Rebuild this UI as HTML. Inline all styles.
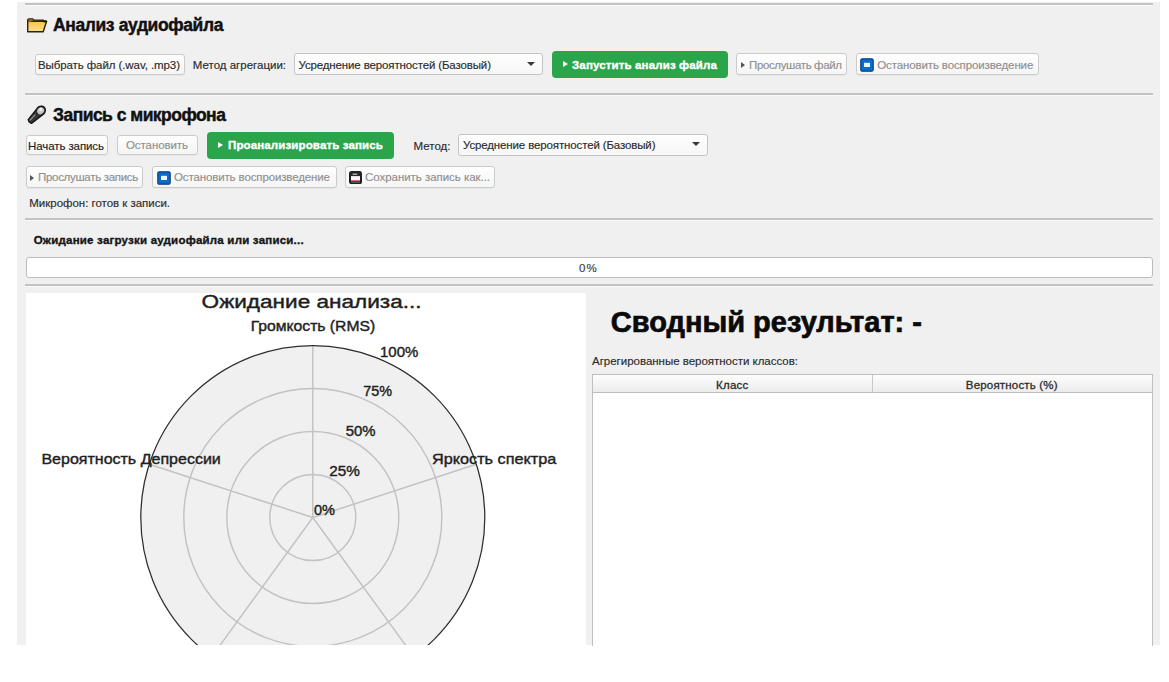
<!DOCTYPE html>
<html><head><meta charset="utf-8"><style>*{margin:0;padding:0;box-sizing:border-box}
html,body{width:1169px;height:682px;overflow:hidden;background:#fff;font-family:"Liberation Sans",sans-serif;color:#000}
.a,.t,.btn,.combo,.green,.prog,.hl{position:absolute}
.t{white-space:nowrap;-webkit-text-stroke:0.15px currentColor}
.tb{-webkit-text-stroke:0.35px currentColor}
.hl{left:25px;width:1128px;height:2px;background:#c3c3c3;box-shadow:0 1px 0 #f9f9f9}
.btn{border:1px solid #cbcbcb;border-radius:3px;background:linear-gradient(#fefefe,#f5f5f5);box-shadow:0 1px 0 rgba(0,0,0,0.04)}
.combo{border:1px solid #c4c4c4;border-radius:3px;background:linear-gradient(#fefefe,#f7f7f7)}
.green{background:#2aa54a;border-radius:4px}
.prog{border:1px solid #bcbcbc;border-radius:3px;background:#fff}
</style></head><body>
<div class="a" style="left:17px;top:2px;width:1143px;height:643px;background:#f0f0f0"></div>
<div class="hl" style="top:3px"></div>
<div class="hl" style="top:93px"></div>
<div class="hl" style="top:217.5px"></div>
<div class="hl" style="top:284px"></div>
<svg class="a" style="left:26px;top:17px" width="22" height="17" viewBox="0 0 22 17">
<defs><linearGradient id="fg" x1="0" y1="0" x2="0" y2="1"><stop offset="0" stop-color="#f6c54a"/><stop offset="1" stop-color="#fbe08a"/></linearGradient></defs>
<path d="M1.7 14.8 L1.7 3.1 Q1.7 1.9 2.9 1.9 L6.8 1.9 L8 3 L17 3 Q17.6 3 17.6 3.6 L17.6 4.3" fill="#e0a040" stroke="#2b2210" stroke-width="1.25" stroke-linejoin="round"/>
<path d="M1.7 14.8 L1.7 4.3 L20.6 4.3 L17.2 14.8 Z" fill="url(#fg)" stroke="#2b2210" stroke-width="1.4" stroke-linejoin="round"/>
<path d="M2.5 4.9 L5.5 4.9" stroke="#f08a30" stroke-width="1.1"/>
<path d="M17.4 4.4 L20.6 4.4" stroke="#111" stroke-width="1.8"/>
</svg>
<div class="t tb" style="left:53.00px;top:16.94px;font-size:17.5px;line-height:17.5px;letter-spacing:-0.391px;color:#111;font-weight:bold;-webkit-text-stroke:0.45px currentColor">Анализ аудиофайла</div>
<div class="btn" style="left:34.5px;top:53.5px;width:150.0px;height:21.0px;"></div>
<div class="t" style="left:37.90px;top:59.92px;font-size:11.5px;line-height:11.5px;letter-spacing:-0.083px;color:#2b2b2b;">Выбрать файл (.wav, .mp3)</div>
<div class="t" style="left:192.80px;top:60.02px;font-size:11.5px;line-height:11.5px;letter-spacing:-0.003px;color:#2b2b2b;">Метод агрегации:</div>
<div class="combo" style="left:293.5px;top:53px;width:249.0px;height:22px;"></div>
<div class="t" style="left:298.50px;top:60.12px;font-size:11.5px;line-height:11.5px;letter-spacing:-0.134px;color:#2b2b2b;">Усреднение вероятностей (Базовый)</div>
<div class="a" style="left:526.8px;top:61.8px;width:0;height:0;border-left:4px solid transparent;border-right:4px solid transparent;border-top:4px solid #3a3a3a"></div>
<div class="green" style="left:551.5px;top:51px;width:176.5px;height:26.700000000000003px;"></div>
<div class="a" style="left:562.5px;top:61.0px;width:0;height:0;border-top:3.5px solid transparent;border-bottom:3.5px solid transparent;border-left:5px solid #fff"></div>
<div class="t tb" style="left:572.00px;top:59.92px;font-size:11.5px;line-height:11.5px;letter-spacing:0.143px;color:#fff;font-weight:bold;">Запустить анализ файла</div>
<div class="btn" style="left:736px;top:53.3px;width:110.5px;height:22.0px;"></div>
<div class="a" style="left:741px;top:62.0px;width:0;height:0;border-top:3.0px solid transparent;border-bottom:3.0px solid transparent;border-left:4px solid #555"></div>
<div class="t" style="left:749.00px;top:60.02px;font-size:11.5px;line-height:11.5px;letter-spacing:-0.364px;color:#8f8f8f;">Прослушать файл</div>
<div class="btn" style="left:855.5px;top:53.3px;width:183.5px;height:22.0px;"></div>
<svg class="a" style="left:859.7px;top:58px" width="14" height="14" viewBox="0 0 14 14"><rect x="0.8" y="0.8" width="12.4" height="12.4" rx="1.5" fill="#0b6cc9" stroke="#0a3f86" stroke-width="1.2"/><rect x="4" y="4.8" width="6" height="4.2" fill="#e8f6ff"/></svg>
<div class="t" style="left:877.30px;top:60.02px;font-size:11.5px;line-height:11.5px;letter-spacing:-0.128px;color:#8f8f8f;">Остановить воспроизведение</div>
<svg class="a" style="left:25px;top:103px" width="24" height="23" viewBox="0 0 24 23">
<g transform="rotate(45 12 11.5)">
<path d="M7.6 6.4 A4.4 5.2 0 0 1 16.4 6.4 L14.6 21.4 Q12 23.2 9.4 21.4 Z" fill="#333" stroke="#121212" stroke-width="1.2" stroke-linejoin="round"/>
<ellipse cx="12" cy="6.3" rx="3.2" ry="3.7" fill="#c4c4c4"/>
<ellipse cx="11.1" cy="5.3" rx="1.5" ry="1.7" fill="#f2f2f2"/>
<path d="M10.9 13.2 L11.1 20.2" stroke="#909090" stroke-width="1.3" stroke-linecap="round"/>
</g></svg>
<div class="t tb" style="left:53.00px;top:106.84px;font-size:17.5px;line-height:17.5px;letter-spacing:-0.529px;color:#111;font-weight:bold;-webkit-text-stroke:0.45px currentColor">Запись с микрофона</div>
<div class="btn" style="left:25.7px;top:134.8px;width:82.7px;height:20.69999999999999px;"></div>
<div class="t" style="left:28.10px;top:140.52px;font-size:11.5px;line-height:11.5px;letter-spacing:-0.100px;color:#1e1e1e;">Начать запись</div>
<div class="btn" style="left:117px;top:134.8px;width:81.4px;height:20.69999999999999px;"></div>
<div class="t" style="left:126.00px;top:140.32px;font-size:11.5px;line-height:11.5px;letter-spacing:-0.083px;color:#8f8f8f;">Остановить</div>
<div class="green" style="left:207.3px;top:131.5px;width:186.39999999999998px;height:27.5px;"></div>
<div class="a" style="left:218.2px;top:142.0px;width:0;height:0;border-top:3.5px solid transparent;border-bottom:3.5px solid transparent;border-left:5px solid #fff"></div>
<div class="t tb" style="left:228.00px;top:140.12px;font-size:11.5px;line-height:11.5px;letter-spacing:0.132px;color:#fff;font-weight:bold;">Проанализировать запись</div>
<div class="t" style="left:413.50px;top:140.72px;font-size:11.5px;line-height:11.5px;letter-spacing:0.020px;color:#2b2b2b;">Метод:</div>
<div class="combo" style="left:458px;top:134px;width:249.60000000000002px;height:22px;"></div>
<div class="t" style="left:463.00px;top:140.12px;font-size:11.5px;line-height:11.5px;letter-spacing:-0.134px;color:#2b2b2b;">Усреднение вероятностей (Базовый)</div>
<div class="a" style="left:691.5px;top:142.3px;width:0;height:0;border-left:4px solid transparent;border-right:4px solid transparent;border-top:4px solid #3a3a3a"></div>
<div class="btn" style="left:26.2px;top:165.6px;width:117.3px;height:22.0px;"></div>
<div class="a" style="left:30.1px;top:174.8px;width:0;height:0;border-top:3.0px solid transparent;border-bottom:3.0px solid transparent;border-left:4px solid #555"></div>
<div class="t" style="left:38.00px;top:172.02px;font-size:11.5px;line-height:11.5px;letter-spacing:-0.303px;color:#8f8f8f;">Прослушать запись</div>
<div class="btn" style="left:152.4px;top:165.6px;width:184.29999999999998px;height:22.0px;"></div>
<svg class="a" style="left:156.5px;top:170.5px" width="14" height="14" viewBox="0 0 14 14"><rect x="0.8" y="0.8" width="12.4" height="12.4" rx="1.5" fill="#0b6cc9" stroke="#0a3f86" stroke-width="1.2"/><rect x="4" y="4.8" width="6" height="4.2" fill="#e8f6ff"/></svg>
<div class="t" style="left:174.00px;top:172.22px;font-size:11.5px;line-height:11.5px;letter-spacing:-0.128px;color:#8f8f8f;">Остановить воспроизведение</div>
<div class="btn" style="left:344.6px;top:165.6px;width:150.7px;height:22.0px;"></div>
<svg class="a" style="left:349px;top:170.8px" width="13" height="13" viewBox="0 0 13 13"><rect x="1" y="1" width="11" height="11.2" rx="1.4" fill="#f7f7f7" stroke="#202020" stroke-width="2"/><rect x="1.5" y="1.5" width="10" height="3.6" fill="#2a2a2a"/><rect x="3.6" y="2.6" width="4.6" height="1.2" fill="#c8c8c8"/><rect x="2" y="9.4" width="9" height="1.6" fill="#a8183a"/></svg>
<div class="t" style="left:365.00px;top:172.22px;font-size:11.5px;line-height:11.5px;letter-spacing:-0.041px;color:#8f8f8f;">Сохранить запись как...</div>
<div class="t" style="left:29.30px;top:198.32px;font-size:11.5px;line-height:11.5px;letter-spacing:-0.023px;color:#2b2b2b;">Микрофон: готов к записи.</div>
<div class="t tb" style="left:33.70px;top:234.72px;font-size:11.5px;line-height:11.5px;letter-spacing:0.216px;color:#151515;font-weight:bold;">Ожидание загрузки аудиофайла или записи...</div>
<div class="prog" style="left:26px;top:257.3px;width:1126.5px;height:21.0px;"></div>
<div class="t" style="left:578.90px;top:263.42px;font-size:11.5px;line-height:11.5px;letter-spacing:1.100px;color:#3a3a3a;">0%</div>
<div class="a" style="left:26px;top:293px;width:560px;height:352px;background:#fff;overflow:hidden">
<svg width="560" height="352" viewBox="0 0 560 352" style="position:absolute;left:0;top:0;font-family:'Liberation Sans',sans-serif">
<circle cx="286.8" cy="224.5" r="172" fill="#f0f0f0"/>
<g stroke="#c2c2c2" stroke-width="1.45" fill="none">
<circle cx="286.8" cy="224.5" r="43"/><circle cx="286.8" cy="224.5" r="86"/><circle cx="286.8" cy="224.5" r="129"/>
<path d="M286.8 224.5 L286.8 52.5 M286.8 224.5 L450.4 171.3 M286.8 224.5 L387.9 363.7 M286.8 224.5 L185.7 363.7 M286.8 224.5 L123.2 171.3"/>
</g>
<circle cx="286.8" cy="224.5" r="172" fill="none" stroke="#2e2e2e" stroke-width="1.25"/>
<g fill="#1e1e1e" stroke="#1e1e1e" stroke-width="0.4">
<text x="175.6" y="15.2" font-size="18" textLength="220" lengthAdjust="spacingAndGlyphs">Ожидание анализа...</text>
<text x="224.7" y="38.2" font-size="15" textLength="124.5" lengthAdjust="spacingAndGlyphs">Громкость (RMS)</text>
<text x="15.4" y="170.8" font-size="15" textLength="179.4" lengthAdjust="spacingAndGlyphs">Вероятность Депрессии</text>
<text x="406" y="170.6" font-size="15" textLength="124.3" lengthAdjust="spacingAndGlyphs">Яркость спектра</text>
<text x="354" y="64" font-size="14.5" textLength="38.3" lengthAdjust="spacingAndGlyphs">100%</text>
<text x="337.2" y="103.4" font-size="14.5" textLength="28.8" lengthAdjust="spacingAndGlyphs">75%</text>
<text x="319.7" y="143" font-size="14.5" textLength="29.8" lengthAdjust="spacingAndGlyphs">50%</text>
<text x="303.3" y="183" font-size="14.5" textLength="30.7" lengthAdjust="spacingAndGlyphs">25%</text>
<text x="287.9" y="222.4" font-size="14.5" textLength="21" lengthAdjust="spacingAndGlyphs">0%</text>
</g></svg></div>
<div class="t tb" style="left:610.80px;top:307.60px;font-size:29px;line-height:29px;letter-spacing:0.000px;color:#0a0a0a;font-weight:bold;-webkit-text-stroke:0.7px currentColor">Сводный результат: -</div>
<div class="t" style="left:592.00px;top:356.42px;font-size:11.5px;line-height:11.5px;letter-spacing:-0.019px;color:#2b2b2b;">Агрегированные вероятности классов:</div>
<div class="a" style="left:592px;top:373.5px;width:561px;height:272px;background:#fff;border:1px solid #bfbfbf;border-bottom:none"></div>
<div class="a" style="left:593px;top:374.5px;width:559px;height:18.5px;background:linear-gradient(#fdfdfd,#ececec);border-bottom:1px solid #bcbcbc"></div>
<div class="a" style="left:871.5px;top:375px;width:1px;height:18px;background:#c8c8c8"></div>
<div class="t" style="left:716.10px;top:379.72px;font-size:11.5px;line-height:11.5px;letter-spacing:0.200px;color:#2b2b2b;-webkit-text-stroke:0.3px currentColor">Класс</div>
<div class="t" style="left:965.80px;top:379.72px;font-size:11.5px;line-height:11.5px;letter-spacing:0.186px;color:#2b2b2b;-webkit-text-stroke:0.3px currentColor">Вероятность (%)</div>
</body></html>
